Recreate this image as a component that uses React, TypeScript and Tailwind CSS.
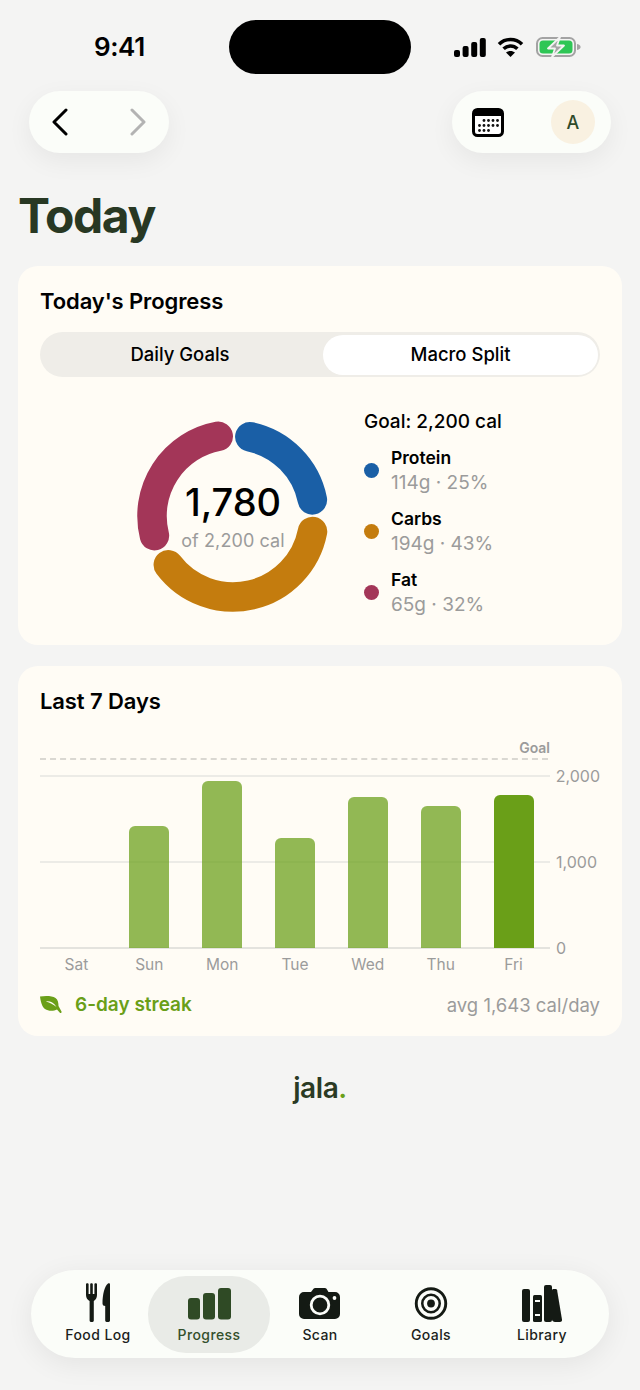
import { ReactNode } from 'react';

const bars = [
  { day: 'Sat', height: 0 },
  { day: 'Sun', height: 122 },
  { day: 'Mon', height: 167 },
  { day: 'Tue', height: 110 },
  { day: 'Wed', height: 151 },
  { day: 'Thu', height: 142 },
  { day: 'Fri', height: 153, today: true },
];

const macros = [
  { name: 'Protein', detail: '114g · 25%', dot: 'bg-[#1a5fa6]' },
  { name: 'Carbs', detail: '194g · 43%', dot: 'bg-[#c47c0e]' },
  { name: 'Fat', detail: '65g · 32%', dot: 'bg-[#a33658]' },
];

// angles are degrees clockwise from 12 o'clock
function arc(from: number, to: number, r = 81, c = 100) {
  const pt = (deg: number) => {
    const a = (deg * Math.PI) / 180;
    return `${(c + r * Math.sin(a)).toFixed(2)} ${(c - r * Math.cos(a)).toFixed(2)}`;
  };
  return `M${pt(from)} A${r} ${r} 0 ${to - from > 180 ? 1 : 0} 1 ${pt(to)}`;
}

function StatusIcons() {
  return (
    <div className="flex items-center">
      <svg width="32" height="19" viewBox="0 0 32 19" fill="#000">
        <rect x="0" y="12" width="6" height="7" rx="2" />
        <rect x="8.6" y="8" width="6" height="11" rx="2" />
        <rect x="17.2" y="4" width="6" height="15" rx="2" />
        <rect x="25.8" y="0" width="6" height="19" rx="2" />
      </svg>
      <svg className="ml-[11px]" width="27" height="20" viewBox="0 0 27 20" fill="none" stroke="#000" strokeWidth="3.6">
        <path d="M2 7.2C8.4 1 18.6 1 25 7.2" />
        <path d="M6.6 11.8C10.6 8 16.4 8 20.4 11.8" />
        <path d="M13.5 20 L9 15.6C11.4 13.4 15.6 13.4 18 15.6Z" fill="#000" stroke="none" />
      </svg>
      <svg className="ml-[12px]" width="45" height="20" viewBox="0 0 45 20" fill="none">
        <rect x="1" y="1" width="38" height="18" rx="5.5" stroke="#a3a3a3" strokeWidth="2" />
        <rect x="3.5" y="3.5" width="33" height="13" rx="3.5" fill="#2ec655" />
        <path d="M41 7c2.6.5 3.6 1.6 3.6 3s-1 2.500-3.600 3z" fill="#a3a3a3" />
        <path d="M24 0 12 11.500h7L16 20 28 8.500h-7z" fill="#a6a6a6" stroke="#f4f4f3" strokeWidth="1.800" strokeLinejoin="round" />
      </svg>
    </div>
  );
}

function CalendarIcon() {
  const dots: [number, number][] = [
    [12, 12.5], [16.500, 12.5], [21, 12.5], [25.500, 12.5],
    [7.500, 17.5], [12, 17.5], [16.500, 17.5], [21, 17.5], [25.500, 17.5],
    [7.500, 22.5], [12, 22.5], [16.500, 22.5],
  ];
  return (
    <svg width="32" height="29" viewBox="0 0 32 29">
      <rect x="1.500" y="1.500" width="29" height="26" rx="4" fill="#fff" stroke="#000" strokeWidth="3" />
      <path d="M1.500 5.500a4 4 0 0 1 4-4h21a4 4 0 0 1 4 4v2.500h-29z" fill="#000" />
      {dots.map(([x, y]) => (
        <circle key={`${x}-${y}`} cx={x} cy={y} r="1.400" fill="#111" />
      ))}
    </svg>
  );
}

function FoodIcon() {
  return (
    <svg className="-mt-[3px]" width="24" height="39" viewBox="0 0 24 39" fill="#141a14">
      <path d="M0 1c0-1 2.600-1 2.600 0v10h1.600V1c0-1 2.600-1 2.600 0v10h1.600V1c0-1 2.600-1 2.600 0v11c0 3-1.500 5-3.200 6v19.500c0 2-4.200 2-4.200 0V18C1.500 17 0 15 0 12z" />
      <path d="M22 .5c1.200-.6 2 0 2 1v36c0 2-4.800 2-4.800 0V23c-1.500 0-2.700-.8-2.700-2.500C16.500 12 18.500 3 22 .5z" />
    </svg>
  );
}

function ProgressIcon() {
  return (
    <svg width="43" height="32" viewBox="0 0 43 32" fill="#2f4a25">
      <rect x="0" y="10" width="12" height="21.500" rx="3" />
      <rect x="15" y="5" width="12" height="26.500" rx="3" />
      <rect x="30" y="0" width="13" height="31.500" rx="3" />
    </svg>
  );
}

function CameraIcon() {
  return (
    <svg className="-ml-[2px]" width="41" height="31" viewBox="0 0 41 31">
      <path d="M5 4h7l2.500-3.200c.4-.5 1-.8 1.700-.8h9.600c.7 0 1.300.3 1.700.8L29.500 4H36a5 5 0 0 1 5 5v17a5 5 0 0 1-5 5H5a5 5 0 0 1-5-5V9a5 5 0 0 1 5-5z" fill="#141a14" />
      <circle cx="21" cy="17" r="8.800" fill="none" stroke="#fbfdf9" strokeWidth="2.800" />
      <circle cx="35.500" cy="10" r="1.900" fill="#fbfdf9" />
    </svg>
  );
}

function GoalsIcon() {
  return (
    <svg width="34" height="33" viewBox="0 0 34 34" fill="none" stroke="#141a14">
      <circle cx="17" cy="17" r="15.200" strokeWidth="3" />
      <circle cx="17" cy="17" r="9" strokeWidth="2.600" />
      <circle cx="17" cy="17" r="4" fill="#141a14" stroke="none" />
    </svg>
  );
}

function LibraryIcon() {
  return (
    <svg width="40" height="37" viewBox="0 0 40 37" fill="#141a14">
      <rect x="0" y="4" width="8" height="33" rx="2" />
      <rect x="11" y="10" width="9" height="27" rx="1.500" />
      <rect x="13" y="15" width="5" height="2" fill="#fbfdf9" />
      <rect x="13" y="29" width="5" height="2" fill="#fbfdf9" />
      <rect x="22" y="0" width="8" height="37" rx="2" />
      <path d="M30 5.500c0-1 .7-1.500 1.500-1.500h2c.8 0 1.400.4 1.600 1.300L40 34.500c.2 1.300-.5 2.500-2 2.500h-5c-1.500 0-3-1-3-2.500z" />
    </svg>
  );
}

function LeafIcon() {
  return (
    <svg width="22" height="18" viewBox="0 0 22 18">
      <path d="M0 .5C5-.2 12-.4 15.500 2c2.500 1.700 3 5 3 8l3 5.500c.4 1-.8 2-1.600 1.200L17 13.500C14 15 8.500 15.500 5 13 1.800 10.700.6 5 0 .5z" fill="#6a9f18" />
      <path d="M6 5.500c3.500-.6 7.500.8 10.500 5.500-3.200-2.600-6.500-4.300-10.500-5.500z" fill="#fffcf5" />
    </svg>
  );
}

function NavItem({ label, icon, active }: { label: string; icon: ReactNode; active?: boolean }) {
  return (
    <div
      className={
        active
          ? '-mx-[5.5px] flex h-[77px] flex-col items-center justify-end rounded-[38px] bg-[#e9ebe7] pb-[8px] text-[#34502c]'
          : 'flex h-[77px] flex-col items-center justify-end pb-[8px] text-[#1c1f1c]'
      }
    >
      <div className="flex h-[40px] items-center justify-center">{icon}</div>
      <div className="mt-[1px] text-[14px] leading-[20px] font-medium tracking-[0.4px]">{label}</div>
    </div>
  );
}

export default function App() {
  return (
    <div className="flex h-[1390px] w-[640px] flex-col overflow-hidden bg-[#f4f4f3] font-['Inter',sans-serif] text-black">
      {/* Status bar */}
      <div className="flex h-[91px] shrink-0 items-start">
        <div className="mt-[30px] w-[229px] pl-[94px] text-[26px] leading-[34px] font-semibold tracking-[-0.4px]">9:41</div>
        <div className="mt-[20px] h-[54px] w-[182px] rounded-[27px] bg-black" />
        <div className="mt-[37px] ml-[43px]">
          <StatusIcons />
        </div>
      </div>

      {/* Top controls */}
      <div className="flex h-[62px] shrink-0 justify-between pr-[29px] pl-[29px]">
        <div className="flex w-[140px] items-center justify-between rounded-[31px] bg-[#fbfdf9] px-[22px] shadow-[0_8px_26px_rgba(0,0,0,0.06)]">
          <svg width="18" height="28" viewBox="0 0 18 28" fill="none" stroke="#000" strokeWidth="3" strokeLinecap="round" strokeLinejoin="round">
            <path d="M15 2 3 14l12 12" />
          </svg>
          <svg width="18" height="28" viewBox="0 0 18 28" fill="none" stroke="#b3b3b3" strokeWidth="3" strokeLinecap="round" strokeLinejoin="round">
            <path d="M3 2l12 12L3 26" />
          </svg>
        </div>
        <div className="flex w-[159px] items-center rounded-[31px] bg-[#fbfdf9] pr-[16px] pl-[20px] shadow-[0_8px_26px_rgba(0,0,0,0.06)]">
          <CalendarIcon />
          <div className="ml-auto flex h-[44px] w-[44px] items-center justify-center rounded-full bg-[#f9f1e1] text-[18px] font-medium text-[#2f4a2a]">A</div>
        </div>
      </div>

      <h1 className="mt-[32px] ml-[18px] text-[48px] leading-[62px] font-bold tracking-[-1.4px] text-[#283823]">Today</h1>

      {/* Progress card */}
      <div className="mx-[18px] mt-[19px] h-[379px] shrink-0 rounded-[20px] bg-[#fffcf5] px-[22px] pt-[22px]">
        <h2 className="text-[22px] leading-[26px] font-semibold tracking-[-0.1px]">Today's Progress</h2>
        <div className="mt-[18px] flex h-[45px] items-center rounded-[23px] bg-[#efede8]">
          <div className="w-[280px] text-center text-[18.5px] font-medium">Daily Goals</div>
          <div className="ml-[3px] flex h-[40px] w-[275px] items-center justify-center rounded-[20px] bg-white text-[18.5px] font-medium">Macro Split</div>
        </div>
        <div className="mt-[33px] flex pl-[93px]">
          <div className="relative mt-[6px] h-[200px] w-[200px] shrink-0">
            <svg width="200" height="200" viewBox="0 0 200 200" fill="none" strokeWidth="29.5" strokeLinecap="round">
              <path d={arc(12, 78.5)} stroke="#1a5fa6" />
              <path d={arc(101, 233)} stroke="#c47c0e" />
              <path d={arc(256, 349.5)} stroke="#a33658" />
            </svg>
            <div className="absolute inset-0 flex flex-col items-center pt-[62px]">
              <div className="text-[38px] leading-[48px] font-medium">1,780</div>
              <div className="mt-[3px] text-[18px] leading-[24px] tracking-[0.1px] text-[#9b9b9b]">of 2,200 cal</div>
            </div>
          </div>
          <div className="ml-[31px] flex-1">
            <div className="text-[19px] leading-[24px] font-medium">Goal: 2,200 cal</div>
            <div className="mt-[11px] flex flex-col gap-[10px]">
              {macros.map((m) => (
                <div key={m.name} className="flex items-center">
                  <div className={`h-[15px] w-[15px] rounded-full ${m.dot}`} />
                  <div className="ml-[12px]">
                    <div className="text-[17.5px] leading-[25px] font-semibold">{m.name}</div>
                    <div className="text-[19px] leading-[26px] text-[#9b9b9b]">{m.detail}</div>
                  </div>
                </div>
              ))}
            </div>
          </div>
        </div>
      </div>

      {/* Last 7 days card */}
      <div className="mx-[18px] mt-[21px] h-[370px] shrink-0 rounded-[20px] bg-[#fffcf5] px-[22px] pt-[22px]">
        <h2 className="text-[22px] leading-[26px] font-semibold tracking-[-0.1px]">Last 7 Days</h2>
        <div className="mt-[26px] flex h-[14px] w-[510px] justify-end">
          <div className="text-[14px] leading-[16px] font-semibold text-[#9b9b9b]">Goal</div>
        </div>
        <div className="relative mt-[4px] h-[190px]">
          {/* grid lines and axis */}
          <div className="absolute top-0 left-0 w-[508px] border-t-2 border-dashed border-[#dad8d2]" />
          <div className="absolute top-[8px] left-0 flex w-full items-center">
            <div className="h-[2px] w-[510px] bg-[#ecebe6]" />
            <div className="ml-[6px] text-[16px] leading-[20px] text-[#9b9b9b]">2,000</div>
          </div>
          <div className="absolute top-[94px] left-0 flex w-full items-center">
            <div className="h-[2px] w-[510px] bg-[#ecebe6]" />
            <div className="ml-[6px] text-[16px] leading-[20px] text-[#9b9b9b]">1,000</div>
          </div>
          <div className="absolute top-[180px] left-0 flex w-full items-center">
            <div className="h-[2px] w-[510px] bg-[#e4e3de]" />
            <div className="ml-[6px] text-[16px] leading-[20px] text-[#9b9b9b]">0</div>
          </div>
          {/* bars */}
          <div className="absolute bottom-0 left-0 grid h-[170px] w-[510px] grid-cols-7 items-end">
            {bars.map((b) => (
              <div key={b.day} className="flex justify-center">
                <div
                  className={b.today ? 'w-[40px] rounded-t-[6px] bg-[#6a9f18]' : 'w-[40px] rounded-t-[6px] bg-[#6a9f18] opacity-[0.73]'}
                  style={{ height: b.height }}
                />
              </div>
            ))}
          </div>
        </div>
        <div className="mt-[6px] grid w-[510px] grid-cols-7">
          {bars.map((b) => (
            <div key={b.day} className="text-center text-[15.5px] leading-[22px] text-[#9b9b9b]">{b.day}</div>
          ))}
        </div>
        <div className="mt-[17px] flex items-center">
          <LeafIcon />
          <div className="ml-[13px] text-[19px] leading-[24px] font-semibold text-[#6a9f18]">6-day streak</div>
          <div className="ml-auto text-[18.5px] leading-[24px] text-[#9b9b9b]">avg 1,643 cal/day</div>
        </div>
      </div>

      <div className="mt-[34px] text-center text-[28px] leading-[36px] font-semibold tracking-[-0.4px] text-[#2a3a24]">
        jala<span className="text-[#6a9f18]">.</span>
      </div>

      {/* Tab bar */}
      <div className="mx-[31px] mt-auto mb-[32px] flex h-[88px] shrink-0 items-center justify-center rounded-[44px] bg-[#fbfdf9] shadow-[0_6px_28px_rgba(0,0,0,0.07)]">
        <div className="grid w-[555px] grid-cols-5">
          <NavItem label="Food Log" icon={<FoodIcon />} />
          <NavItem label="Progress" icon={<ProgressIcon />} active />
          <NavItem label="Scan" icon={<CameraIcon />} />
          <NavItem label="Goals" icon={<GoalsIcon />} />
          <NavItem label="Library" icon={<LibraryIcon />} />
        </div>
      </div>
    </div>
  );
}
